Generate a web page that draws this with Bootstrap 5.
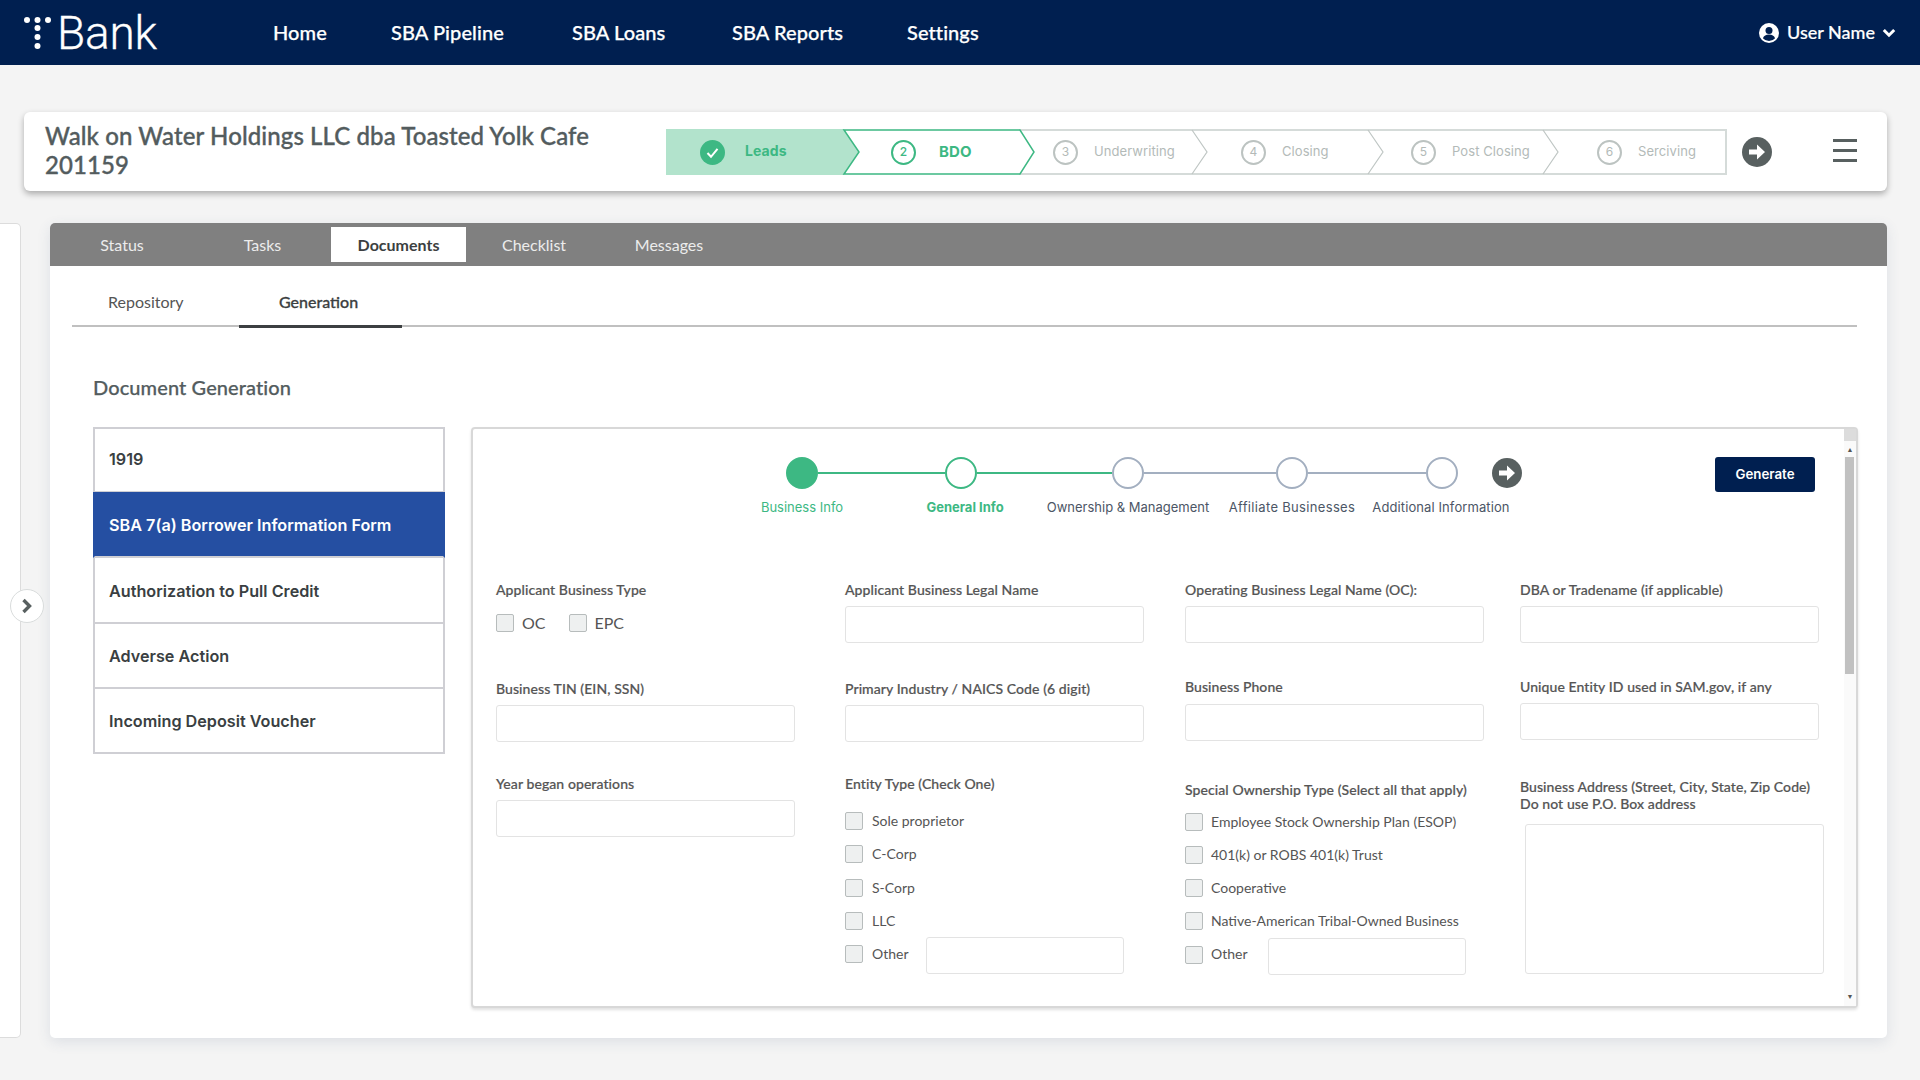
<!DOCTYPE html>
<html lang="en">
<head>
<meta charset="utf-8">
<title>Bank - Document Generation</title>
<link href="https://cdn.jsdelivr.net/npm/bootstrap@5.3.0/dist/css/bootstrap.min.css" rel="stylesheet">
<style>
html,body{height:1080px;overflow:hidden}
body{background:#f4f4f4;font-family:"Lato","Liberation Sans",sans-serif;color:#555}
.topbar{height:65px;background:#001f50;padding:0 24px 0 24px}
.logo-wrap{width:249px;gap:2px}
.logo-text{font-family:"Roboto","Liberation Sans",sans-serif;font-weight:300;font-size:46px;line-height:65px;color:#fff;letter-spacing:-.2px;-webkit-text-stroke:.3px #fff;margin-top:2px}
.toplink{color:#fff;font-size:20px;font-weight:500;-webkit-text-stroke:.25px #fff;text-decoration:none;padding:0;margin-top:-2px;letter-spacing:.08px}
.tl1{width:118px}.tl2{width:181px}.tl3{width:160px}.tl4{width:175px}
.user-name{color:#fff;font-size:18px;font-weight:500;-webkit-text-stroke:.2px #fff;margin:0 7px 0 8px}
.headcard{margin:47px 33px 0 24px;height:79px;background:#fff;border-radius:6px;box-shadow:0 3px 6px rgba(0,0,0,.3)}
.headtitle{flex:0 0 642px;padding:0 0 3px 21px;font-size:24px;line-height:29px;font-weight:500;-webkit-text-stroke:.35px #535c5e;letter-spacing:.1px;color:#535c5e;margin:0}
.chev{width:1061px;height:46px;position:relative;margin-top:1px}
.chev>svg{position:absolute;left:0;top:0}
.chev-step{position:relative;height:46px;font-family:"Inter",sans-serif;font-size:13px;letter-spacing:.08px;color:#b3bab8;gap:16px}
.s1{width:178px;padding-left:34px;gap:20px;color:#3db883;font-weight:700;font-size:14px}
.s1 span{margin-top:-4px}
.s2{width:176px;padding-left:47px;gap:23px;color:#3db883;font-weight:700;font-size:15px}
.s3{width:172px;padding-left:33px}.s4{width:176px;padding-left:49px}.s5{width:175px;padding-left:43px}.s6{width:184px;padding-left:54px}
.numdot{width:25px;height:25px;border-radius:50%;border:2px solid #bcc3c1;font-size:12px;line-height:1;display:flex;align-items:center;justify-content:center;flex:none}
.s2 .numdot{border-color:#3db883;font-weight:500;font-size:12px}
.burger{width:24px;margin:-3px 0 0 61px;gap:7px}
.burger span{height:3px;background:#586060;display:block}
.go-a{margin-left:15px;flex:none}
.bodyrow{margin-top:32px;height:815px;gap:29px}
.sidepanel{width:21px;background:#fff;border:1px solid #dcdcdc;border-left:0;border-radius:0 5px 5px 0;position:relative}
.sidebtn{position:absolute;left:10px;top:365px;width:34px;height:34px;border-radius:50%;background:#fff;border:1px solid #d9dcdc;display:flex;align-items:center;justify-content:center}
.maincard{width:1837px;background:#fff;border-radius:5px;box-shadow:0 4px 14px rgba(60,80,120,.12)}
.tabbar{height:43px;background:#808080;border-radius:5px 5px 0 0;align-items:center}
.tabbar .nav-link{padding:0;height:35px;line-height:35px;text-align:center;color:#ececec;font-size:16px;border-radius:0}
.tw1{width:144px}.tw2{width:137px}.tw3{width:135px}.tw4{width:136px}.tw5{width:134px}
.tabbar .nav-link.active{background:#fff;color:#3c3f41;font-weight:700}
.subnav{margin:0 30px 0 22px;height:61px;border-bottom:2px solid #c0c0c0;align-items:flex-end}
.subnav .nav-link{padding:0;height:62px;line-height:72px;font-size:16px;color:#555;margin-bottom:-3px}
.sub1{width:167px;padding-left:36px!important}
.sub2{width:163px;padding-left:40px!important;color:#3c3f41!important;font-weight:500;-webkit-text-stroke:.3px #3c3f41;border-bottom:3px solid #3c3f41}
.docbody{padding:46px 29px 0 43px}
.dochead{font-size:20px;line-height:28px;font-weight:500;-webkit-text-stroke:.25px #535c5e;letter-spacing:.1px;color:#535c5e;margin:0 0 26px}
.doclist{width:352px;border-radius:0}
.doclist .list-group-item{border:2px solid #cfcfd4;border-radius:0;margin-top:0;padding:2px 0 0 14px;display:flex;align-items:center;height:65px;font-family:"Inter",sans-serif;font-weight:600;font-size:16.2px;color:#3a3f42;border-top-width:0}
.doclist .list-group-item:first-child{height:66px;border-top-width:2px;padding-top:0;padding-bottom:1px}
.doclist .list-group-item:nth-child(3){height:66px}
.doclist .list-group-item.active{background:#254fa2;border-color:#254fa2;color:#fff;height:66px;border-bottom-color:#cfcfd4}
.formpanel{width:1387px;height:581px;margin-left:26px;background:#fff;border:2px solid #d8d8d8;border-radius:4px;box-shadow:0 2px 3px rgba(0,0,0,.12)}
.fcontent{flex:1;min-width:0}
.sbar{width:12px;background:#fafafa;flex:none}
.sb-top{height:12px;background:#dcdcdc}
.sb-arr{height:16px;color:#555;font-size:7px;line-height:16px;text-align:center}
.sb-thumb{height:217px;width:9px;margin-left:1px;background:#c1c1c1}
.sb-fill{flex:1}
.sb-arr.dn{margin-bottom:2px}
.gtop{padding-top:28px;height:151px}
.gleft{margin-left:313px;width:736px}
.gtrack{height:32px}
.gdot{width:32px;height:32px;border-radius:50%;border:2px solid #a3afc0;background:#fff;flex:none}
.gdot.done{background:#3db883;border-color:#3db883}
.gdot.cur{border-color:#3db883}
.gline{height:2.5px;background:#a3afc0;flex:none}
.gline.on{background:#3db883}
.gl1{width:127px}.gl2{width:135px}.gl3{width:132px}.gl4{width:118px}
.gapz{margin:-1px 0 0 34px;flex:none}
.glabels{margin:8px 0 0 -69px;font-family:"Inter",sans-serif;font-size:13px;line-height:20px;color:#4c5666;text-align:center;white-space:nowrap;font-variant-ligatures:none}
.lc1{width:170px;color:#3db883}.lc2{width:156px;color:#3db883;font-weight:700}.lc3{width:170px}.lc4{width:158px;letter-spacing:.33px}.lc5{width:140px;letter-spacing:.1px}
.btn-gen{width:100px;height:35px;background:#001f50;color:#fff;font-family:"Inter",sans-serif;font-weight:600;font-size:13.300px;padding:0;border-radius:3px;margin:0 29px 0 auto;border:0}
.btn-gen:hover{background:#001f50;color:#fff}
.fgrid{margin-left:23px}
.fc1,.fc2,.fc3,.fc4{flex:none}
.fc1{width:299px;margin-right:50px}.fc2{width:299px;margin-right:41px}.fc3{width:299px;margin-right:36px}.fc4{width:299px}
.flab{font-size:14px;line-height:20px;font-weight:500;-webkit-text-stroke:.2px #555;letter-spacing:.08px;color:#555;margin:0 0 6px;display:block;white-space:nowrap}
.finput{height:37px;border:1px solid #e3e3e3;border-radius:3px;padding:0 8px;box-shadow:none}
.m36{margin-top:36px}.m34{margin-top:34px}.m32{margin-top:32px}.m39{margin-top:39px}
.mt7{margin-top:7px}
.form-check .form-check-input.chk{width:18px;height:18px;margin:0;border:1px solid #b7bcbc;border-radius:2px;background-color:#eef0f0;flex:none;float:none}
.form-check.rowchk{padding:0;min-height:18px;margin:0 0 15.3px;display:flex;align-items:center;gap:9px;font-size:14px;line-height:18px;color:#555}
.form-check.first18{margin-top:18px}
.form-check.first13{margin-top:12.5px}
.form-check.rowchk.c3{gap:8px}
.form-check.rowchk.rowother{margin:-8px 0 0;height:37px}
.form-check.rowchk.rowother .form-check-input.chk{margin-top:-3px}
.form-check.rowchk.rowother span{margin-top:-4px}
.otherinp{width:198px;margin-left:8px}
.otherinp.o3{margin-left:12.5px}
.typerow{gap:0;margin-top:13px;font-size:16px;color:#555}
.typerow .form-check{padding:0;margin:0;min-height:18px;display:flex;align-items:center;gap:8px;line-height:19px}
.typerow .form-check+.form-check{margin-left:23px}
.fieldtin{margin-top:47px}
.fieldyear{margin-top:32px}
.addr{font-size:14px;line-height:17px;font-weight:500;-webkit-text-stroke:.2px #555;letter-spacing:.08px;color:#555;margin:-1px 0 12px}
.addrbox{width:299px;height:150px;margin-left:5px;resize:none;border:1px solid #e3e3e3;border-radius:3px}
</style>
</head>
<body>
<nav class="topbar d-flex align-items-center">
  <div class="logo-wrap d-flex align-items-center">
    <svg width="31" height="32" viewBox="0 0 31 32" aria-hidden="true" class="flex-none"><g fill="#fff"><circle cx="3" cy="3" r="3"/><circle cx="13.5" cy="3" r="3"/><circle cx="24" cy="3" r="3"/><circle cx="13.5" cy="11" r="3"/><circle cx="13.5" cy="20" r="3"/><circle cx="13.5" cy="29" r="3"/></g></svg>
    <span class="logo-text">Bank</span>
  </div>
  <a class="toplink tl1" href="#">Home</a>
  <a class="toplink tl2" href="#">SBA Pipeline</a>
  <a class="toplink tl3" href="#">SBA Loans</a>
  <a class="toplink tl4" href="#">SBA Reports</a>
  <a class="toplink" href="#">Settings</a>
  <div class="ms-auto d-flex align-items-center">
    <svg width="20" height="20" viewBox="0 0 20 20" aria-hidden="true"><circle cx="10" cy="10" r="10" fill="#fff"/><circle cx="10" cy="7.600" r="3.500" fill="#001f50"/><path d="M3.900 15.200c1-2.400 3-3.600 6.100-3.600s5.100 1.200 6.100 3.600A8 8 0 0 1 10 18a8 8 0 0 1-6.100-2.800z" fill="#001f50"/></svg>
    <span class="user-name">User Name</span>
    <svg width="14" height="10" viewBox="0 0 14 10" aria-hidden="true"><path d="M1.800 2 7 7.200 12.200 2" fill="none" stroke="#fff" stroke-width="3"/></svg>
  </div>
</nav>

<section class="headcard d-flex align-items-center">
  <h1 class="headtitle">Walk on Water Holdings LLC dba Toasted Yolk Cafe<br>201159</h1>
  <div class="chev flex-none d-flex">
    <svg width="1061" height="46" viewBox="0 0 1061 46" aria-hidden="true">
      <rect x="354" y="1" width="706" height="44" fill="#fff" stroke="#d5dbd9" stroke-width="2"/>
      <polygon points="0,0 178,0 193,23 178,46 0,46" fill="#b2e3cc"/>
      <g fill="none" stroke="#bfc6c4" stroke-width="1.200">
        <polyline points="526,1 541,23 526,45"/><polyline points="702,1 717,23 702,45"/><polyline points="877,1 892,23 877,45"/>
      </g>
      <polygon points="178,1 354,1 368,23 354,45 178,45 193,23" fill="#fff" stroke="#3db883" stroke-width="1.500"/>
    </svg>
    <div class="chev-step s1 d-flex align-items-center">
      <svg width="25" height="25" viewBox="0 0 25 25" aria-hidden="true"><circle cx="12.500" cy="12.500" r="12.500" fill="#3db883"/><path d="M7.500 13l3.500 3.800 6.500-8" fill="none" stroke="#fff" stroke-width="2"/></svg>
      <span>Leads</span>
    </div>
    <div class="chev-step s2 d-flex align-items-center"><span class="numdot">2</span><span>BDO</span></div>
    <div class="chev-step s3 d-flex align-items-center"><span class="numdot">3</span><span>Underwriting</span></div>
    <div class="chev-step s4 d-flex align-items-center"><span class="numdot">4</span><span>Closing</span></div>
    <div class="chev-step s5 d-flex align-items-center"><span class="numdot">5</span><span>Post Closing</span></div>
    <div class="chev-step s6 d-flex align-items-center"><span class="numdot">6</span><span>Serciving</span></div>
  </div>
  <svg class="go-a" width="30" height="30" viewBox="0 0 30 30" aria-hidden="true"><circle cx="15" cy="15" r="15" fill="#586060"/><path d="M7 12.500h8V7.500l8 7.500-8 7.500v-5H7z" fill="#fff"/></svg>
  <div class="burger d-flex flex-column"><span></span><span></span><span></span></div>
</section>

<div class="bodyrow d-flex">
  <aside class="sidepanel flex-none">
    <span class="sidebtn"><svg width="12" height="16" viewBox="0 0 12 16" aria-hidden="true"><path d="M2.500 2 8.500 8l-6 6" fill="none" stroke="#586060" stroke-width="3.400"/></svg></span>
  </aside>
  <main class="maincard flex-none">
    <ul class="nav tabbar">
      <li class="nav-item"><a class="nav-link tw1" href="#">Status</a></li>
      <li class="nav-item"><a class="nav-link tw2" href="#">Tasks</a></li>
      <li class="nav-item"><a class="nav-link tw3 active" href="#">Documents</a></li>
      <li class="nav-item"><a class="nav-link tw4" href="#">Checklist</a></li>
      <li class="nav-item"><a class="nav-link tw5" href="#">Messages</a></li>
    </ul>
    <ul class="nav subnav">
      <li class="nav-item"><a class="nav-link sub1" href="#">Repository</a></li>
      <li class="nav-item"><a class="nav-link sub2" href="#">Generation</a></li>
    </ul>
    <div class="docbody">
      <h2 class="dochead">Document Generation</h2>
      <div class="d-flex align-items-start">
        <div class="list-group doclist flex-none">
          <a href="#" class="list-group-item">1919</a>
          <a href="#" class="list-group-item active">SBA 7(a) Borrower Information Form</a>
          <a href="#" class="list-group-item">Authorization to Pull Credit</a>
          <a href="#" class="list-group-item">Adverse Action</a>
          <a href="#" class="list-group-item">Incoming Deposit Voucher</a>
        </div>
        <div class="formpanel d-flex flex-none">
          <div class="fcontent">
            <div class="gtop d-flex align-items-start">
              <div class="gleft">
                <div class="gtrack d-flex align-items-center">
                  <span class="gdot done"></span><span class="gline gl1 on"></span>
                  <span class="gdot cur"></span><span class="gline gl2 on"></span>
                  <span class="gdot"></span><span class="gline gl3"></span>
                  <span class="gdot"></span><span class="gline gl4"></span>
                  <span class="gdot"></span>
                  <svg class="gapz" width="30" height="30" viewBox="0 0 30 30" aria-hidden="true"><circle cx="15" cy="15" r="15" fill="#586060"/><path d="M7 12.500h8V7.500l8 7.500-8 7.500v-5H7z" fill="#fff"/></svg>
                </div>
                <div class="glabels d-flex">
                  <div class="lc1">Business Info</div><div class="lc2">General Info</div><div class="lc3">Ownership &amp; Management</div><div class="lc4">Affiliate Businesses</div><div class="lc5">Additional Information</div>
                </div>
              </div>
              <button type="button" class="btn btn-gen">Generate</button>
            </div>
            <form class="fgrid d-flex">
              <div class="fc1">
                <label class="flab">Applicant Business Type</label>
                <div class="typerow d-flex">
                  <div class="form-check"><input class="form-check-input chk" type="checkbox"><span>OC</span></div>
                  <div class="form-check"><input class="form-check-input chk" type="checkbox"><span>EPC</span></div>
                </div>
                <div class="fieldtin">
                  <label class="flab">Business TIN (EIN, SSN)</label>
                  <input class="form-control finput" type="text">
                </div>
                <div class="fieldyear">
                  <label class="flab">Year began operations</label>
                  <input class="form-control finput" type="text">
                </div>
              </div>
              <div class="fc2">
                <label class="flab">Applicant Business Legal Name</label>
                <input class="form-control finput" type="text">
                <div class="m36">
                  <label class="flab">Primary Industry / NAICS Code (6 digit)</label>
                  <input class="form-control finput" type="text">
                </div>
                <div class="m32">
                  <label class="flab m-0">Entity Type (Check One)</label>
                  <div class="form-check rowchk first18"><input class="form-check-input chk" type="checkbox"><span>Sole proprietor</span></div>
                  <div class="form-check rowchk"><input class="form-check-input chk" type="checkbox"><span>C-Corp</span></div>
                  <div class="form-check rowchk"><input class="form-check-input chk" type="checkbox"><span>S-Corp</span></div>
                  <div class="form-check rowchk"><input class="form-check-input chk" type="checkbox"><span>LLC</span></div>
                  <div class="form-check rowchk rowother"><input class="form-check-input chk" type="checkbox"><span>Other</span><input class="form-control finput otherinp" type="text"></div>
                </div>
              </div>
              <div class="fc3">
                <label class="flab">Operating Business Legal Name (OC):</label>
                <input class="form-control finput" type="text">
                <div class="m34">
                  <label class="flab">Business Phone</label>
                  <input class="form-control finput mt7" type="text">
                </div>
                <div class="m39">
                  <label class="flab m-0">Special Ownership Type (Select all that apply)</label>
                  <div class="form-check rowchk c3 first13"><input class="form-check-input chk" type="checkbox"><span>Employee Stock Ownership Plan (ESOP)</span></div>
                  <div class="form-check rowchk c3"><input class="form-check-input chk" type="checkbox"><span>401(k) or ROBS 401(k) Trust</span></div>
                  <div class="form-check rowchk c3"><input class="form-check-input chk" type="checkbox"><span>Cooperative</span></div>
                  <div class="form-check rowchk c3"><input class="form-check-input chk" type="checkbox"><span>Native-American Tribal-Owned Business</span></div>
                  <div class="form-check rowchk c3 rowother"><input class="form-check-input chk" type="checkbox"><span>Other</span><input class="form-control finput otherinp o3" type="text"></div>
                </div>
              </div>
              <div class="fc4">
                <label class="flab">DBA or Tradename (if applicable)</label>
                <input class="form-control finput" type="text">
                <div class="m34">
                  <label class="flab">Unique Entity ID used in SAM.gov, if any</label>
                  <input class="form-control finput" type="text">
                </div>
                <div class="m39">
                  <p class="addr">Business Address (Street, City, State, Zip Code)<br>Do not use P.O. Box address</p>
                  <textarea class="form-control addrbox"></textarea>
                </div>
              </div>
            </form>
          </div>
          <div class="sbar d-flex flex-column">
            <div class="sb-top"></div>
            <div class="sb-arr">&#9650;</div>
            <div class="sb-thumb"></div>
            <div class="sb-fill"></div>
            <div class="sb-arr dn">&#9660;</div>
          </div>
        </div>
      </div>
    </div>
  </main>
</div>
<script src="https://cdn.jsdelivr.net/npm/bootstrap@5.3.0/dist/js/bootstrap.bundle.min.js"></script>
</body>
</html>
